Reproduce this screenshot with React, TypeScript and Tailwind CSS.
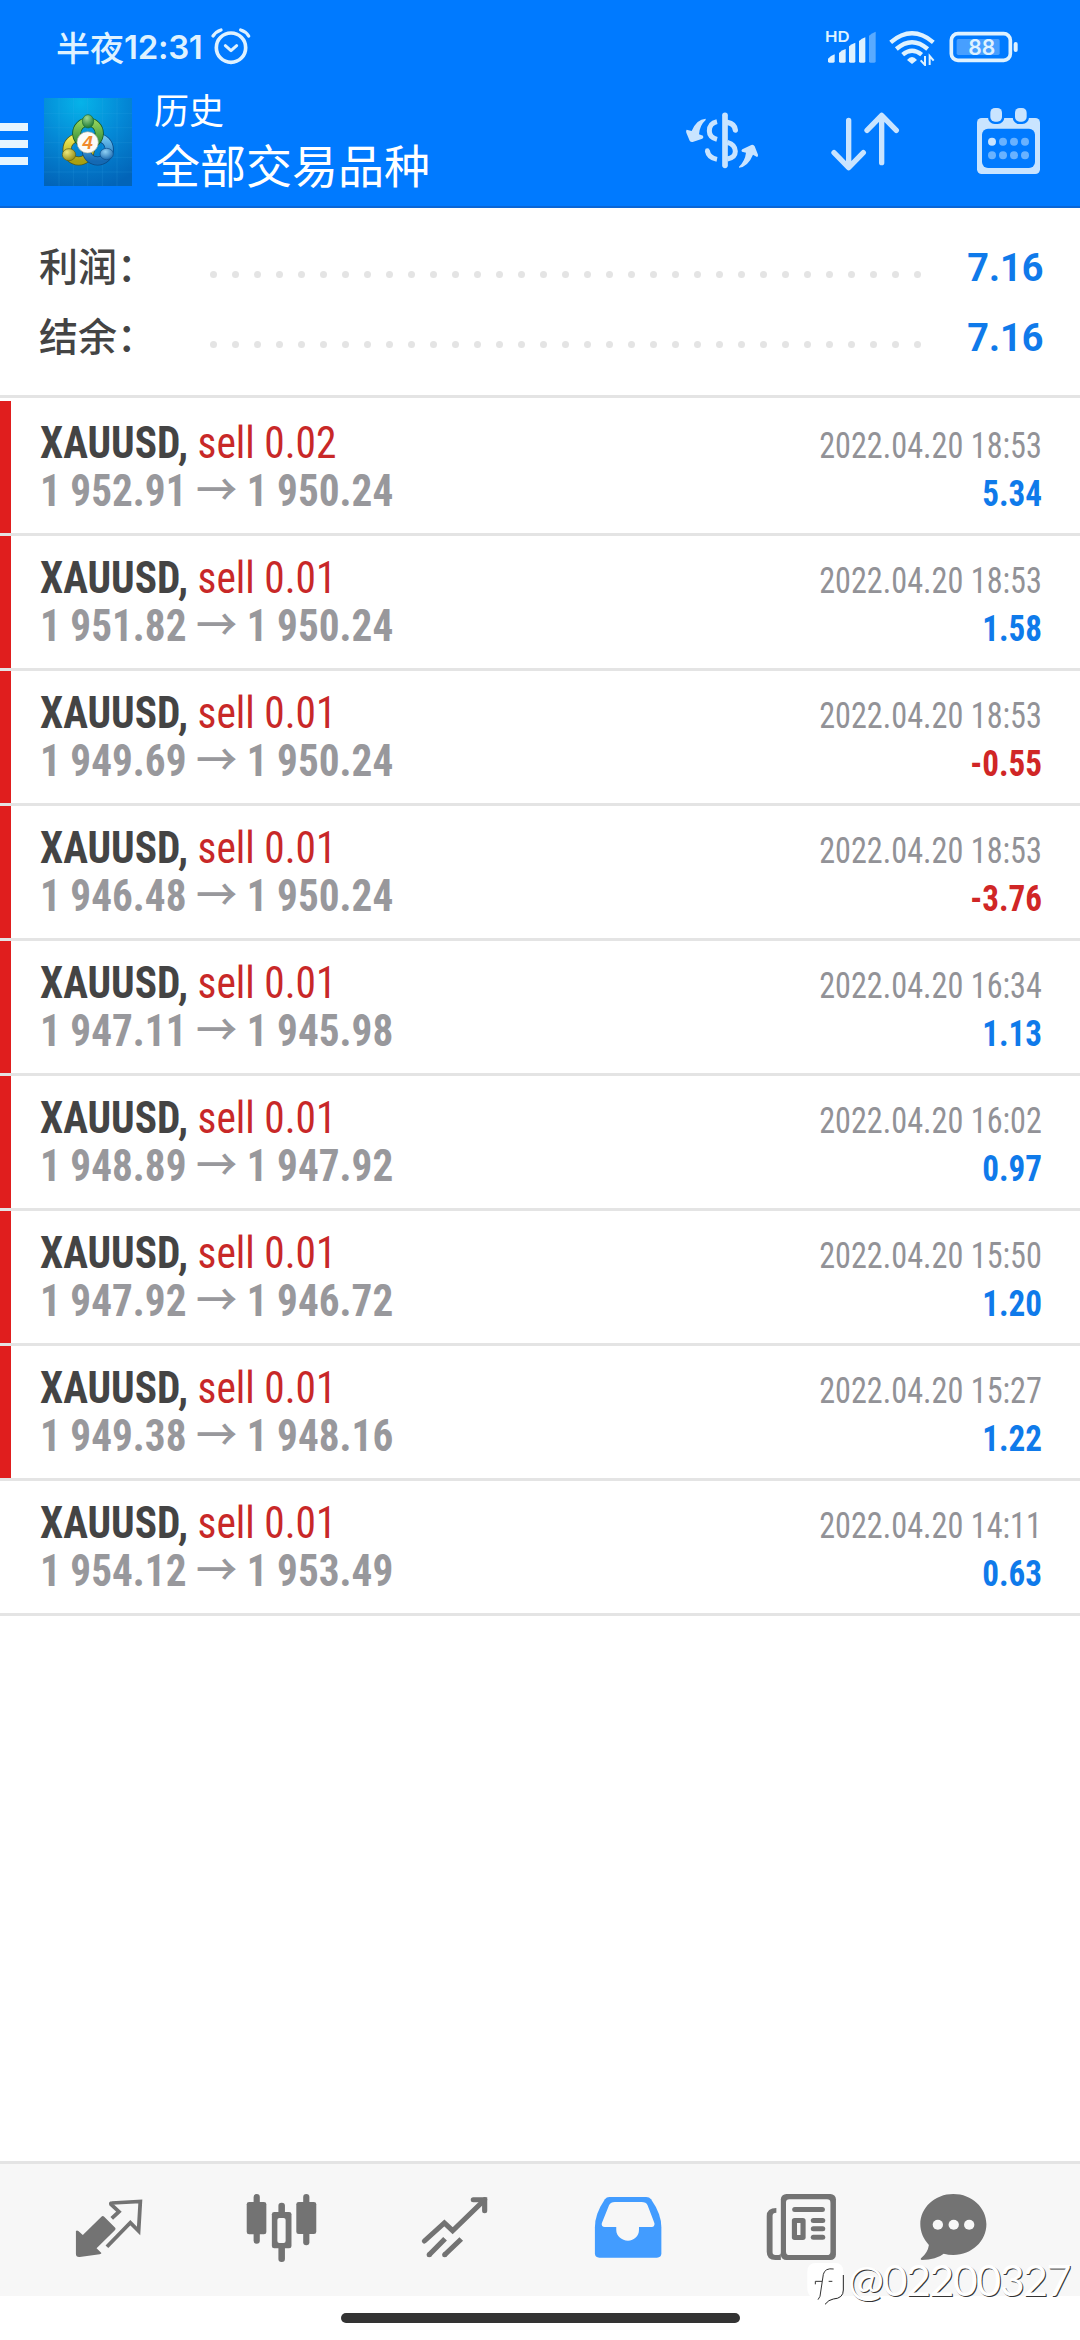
type Deal = {
  volume: string;
  open: string;
  close: string;
  time: string;
  profit: string;
  marked?: boolean;
};

const deals: Deal[] = [
  { volume: "0.02", open: "1 952.91", close: "1 950.24", time: "2022.04.20 18:53", profit: "5.34", marked: true },
  { volume: "0.01", open: "1 951.82", close: "1 950.24", time: "2022.04.20 18:53", profit: "1.58", marked: true },
  { volume: "0.01", open: "1 949.69", close: "1 950.24", time: "2022.04.20 18:53", profit: "-0.55", marked: true },
  { volume: "0.01", open: "1 946.48", close: "1 950.24", time: "2022.04.20 18:53", profit: "-3.76", marked: true },
  { volume: "0.01", open: "1 947.11", close: "1 945.98", time: "2022.04.20 16:34", profit: "1.13", marked: true },
  { volume: "0.01", open: "1 948.89", close: "1 947.92", time: "2022.04.20 16:02", profit: "0.97", marked: true },
  { volume: "0.01", open: "1 947.92", close: "1 946.72", time: "2022.04.20 15:50", profit: "1.20", marked: true },
  { volume: "0.01", open: "1 949.38", close: "1 948.16", time: "2022.04.20 15:27", profit: "1.22", marked: true },
  { volume: "0.01", open: "1 954.12", close: "1 953.49", time: "2022.04.20 14:11", profit: "0.63" },
];

function AlarmIcon() {
  return (
    <svg className="h-[38px] w-[42px]" viewBox="632 82 126 114" fill="none" stroke="#dff2ff" strokeLinecap="round" strokeLinejoin="round">
      <circle cx="695" cy="144" r="44" strokeWidth="11" />
      <path d="M678 138 L695 153 L712 138" strokeWidth="9" />
      <path d="M641 109 Q650 96 665 91 M748 109 Q740 96 724 91" strokeWidth="10" />
    </svg>
  );
}

function SignalIcon() {
  return (
    <svg className="h-[44px] w-[54px]" viewBox="520 64 162 132" fill="#dff2ff">
      <text x="523" y="128" fontFamily="Inter" fontWeight="600" fontSize="45" textLength="74" lengthAdjust="spacingAndGlyphs">HD</text>
      <path d="M532 185 V177 Q540 168 552 164 V185 Q552 189 548 189 H536 Q532 189 532 185Z" />
      <path d="M565 185 V160 Q573 151 585 148 V185 Q585 189 581 189 H569 Q565 189 565 185Z" />
      <path d="M595 185 V140 Q603 132 614 129 V185 Q614 189 610 189 H599 Q595 189 595 185Z" />
      <path d="M625 185 V124 Q633 116 644 113 V185 Q644 189 640 189 H629 Q625 189 625 185Z" />
      <path d="M655 185 V108 Q663 100 675 96 V185 Q675 189 671 189 H659 Q655 189 655 185Z" opacity="0.4" />
    </svg>
  );
}

function WifiIcon() {
  return (
    <svg className="h-[36px] w-[48px]" viewBox="711 90 144 108" fill="none" stroke="#dff2ff">
      <path d="M719 127 Q783 73 847 127" strokeWidth="13" />
      <path d="M736 147 Q783 106 830 147" strokeWidth="13" />
      <path d="M755 164 Q783 140 812 164" strokeWidth="13" />
      <path d="M768 180 Q783 162 798 180 L783 192Z" fill="#dff2ff" stroke="none" />
      <path d="M822 168 V195 L809 181 M836 195 V168 L848 182" strokeWidth="6" />
    </svg>
  );
}

function BatteryIcon() {
  return (
    <svg className="h-[32px] w-[70px]" viewBox="895 93 210 96">
      <rect x="902" y="101" width="177" height="80" rx="20" fill="none" stroke="#dff2ff" strokeWidth="11" />
      <rect x="918" y="117" width="129" height="48" rx="5" fill="#479fff" />
      <rect x="1089" y="126" width="12" height="30" rx="6" fill="#dff2ff" />
      <text x="953" y="166" fill="#dff2ff" fontFamily="Inter" fontWeight="600" fontSize="66" textLength="81" lengthAdjust="spacingAndGlyphs">88</text>
    </svg>
  );
}

function AppLogo() {
  return (
    <svg className="h-[88px] w-[88px]" viewBox="18 16 264 264">
      <defs>
        <radialGradient id="sky" cx="0.42" cy="0.05" r="1">
          <stop offset="0" stopColor="#06b3e9" />
          <stop offset="0.5" stopColor="#0488d6" />
          <stop offset="1" stopColor="#0264b8" />
        </radialGradient>
        <linearGradient id="green" x1="0" y1="0" x2="0" y2="1">
          <stop offset="0" stopColor="#8fd05a" />
          <stop offset="1" stopColor="#2c8838" />
        </linearGradient>
        <linearGradient id="yellow" x1="0" y1="0" x2="0" y2="1">
          <stop offset="0" stopColor="#f0ea58" />
          <stop offset="1" stopColor="#a8a012" />
        </linearGradient>
        <linearGradient id="blue" x1="0" y1="0" x2="0" y2="1">
          <stop offset="0" stopColor="#6fc4f0" />
          <stop offset="1" stopColor="#1469b4" />
        </linearGradient>
        <radialGradient id="knobGreen" cx="0.4" cy="0.25" r="0.8">
          <stop offset="0" stopColor="#9ed893" />
          <stop offset="1" stopColor="#14742c" />
        </radialGradient>
        <radialGradient id="knobYellow" cx="0.35" cy="0.3" r="0.8">
          <stop offset="0" stopColor="#eee87a" />
          <stop offset="1" stopColor="#8a8410" />
        </radialGradient>
        <radialGradient id="knobBlue" cx="0.4" cy="0.3" r="0.8">
          <stop offset="0" stopColor="#8fd0f4" />
          <stop offset="1" stopColor="#0f5fa8" />
        </radialGradient>
      </defs>
      <rect x="18" y="16" width="264" height="264" fill="url(#sky)" />
      <path d="M63 16V280M106 16V280M149 16V280M193 16V280M237 16V280M18 62H282M18 105H282M18 150H282M18 194H282M18 238H282" stroke="#48b4ec" strokeOpacity="0.22" strokeWidth="2" />
      <g fill="none">
        <circle cx="122" cy="170" r="35" stroke="#4f5a1c" strokeWidth="27" />
        <circle cx="122" cy="170" r="35" stroke="url(#yellow)" strokeWidth="22" />
        <circle cx="179" cy="170" r="35" stroke="#0b4a86" strokeWidth="27" />
        <circle cx="179" cy="170" r="35" stroke="url(#blue)" strokeWidth="22" />
        <circle cx="150" cy="122" r="34" stroke="#155a24" strokeWidth="27" />
        <circle cx="150" cy="122" r="34" stroke="url(#green)" strokeWidth="22" />
      </g>
      <ellipse cx="150" cy="86" rx="17" ry="20" fill="url(#knobGreen)" stroke="#1d6a30" strokeWidth="2" />
      <ellipse cx="93" cy="186" rx="20" ry="18" fill="url(#knobYellow)" stroke="#5e5c14" strokeWidth="2" />
      <ellipse cx="206" cy="184" rx="20" ry="17" fill="url(#knobBlue)" stroke="#0f4f8c" strokeWidth="2" />
      <circle cx="149" cy="149" r="32" fill="#fbfbf8" stroke="#9aa89a" strokeWidth="2" />
      <text x="149" y="169" textAnchor="middle" fontFamily="Liberation Sans" fontSize="56" fontWeight="700" fontStyle="italic" fill="#f08a2c">4</text>
    </svg>
  );
}

function CurrencyIcon() {
  return (
    <svg className="h-[80px] w-[100px]" viewBox="0 0 300 240" fill="none" stroke="#c9e4ff">
      <path d="M150 46V196" strokeWidth="17" strokeLinecap="round" />
      <path d="M157 67 Q179 71 181 90" strokeWidth="16" strokeLinecap="round" />
      <path d="M126 65 Q103 70 103 93 Q103 112 126 118" strokeWidth="15" />
      <path d="M157 127 Q181 134 181 154 Q181 173 157 177" strokeWidth="15" />
      <path d="M97 152 Q100 173 126 178" strokeWidth="15" />
      <circle cx="97" cy="152" r="7" fill="#c9e4ff" stroke="none" />
      <path d="M92 56 Q65 57 50 93 L35 89 Q32 92 34 98 L44 122 Q47 127 53 126 L82 116 Q87 113 84 107 L72 103 Q74 76 92 60Z" fill="#c9e4ff" stroke="none" />
      <path d="M192 203 Q219 200 234 164 L246 171 Q250 170 249 164 L239 139 Q236 133 229 135 L202 148 Q197 152 201 155 L213 158 Q210 183 192 200Z" fill="#c9e4ff" stroke="none" />
    </svg>
  );
}

function SortIcon() {
  return (
    <svg className="h-[80px] w-[80px]" viewBox="525 300 240 240" fill="none" stroke="#c9e4ff" strokeWidth="16" strokeLinecap="round" strokeLinejoin="round">
      <path d="M596 361V501M552 458L596 503L640 458" />
      <path d="M695 488V348M651 391L695 346L739 391" />
    </svg>
  );
}

function CalendarIcon() {
  return (
    <svg className="h-[80px] w-[80px]" viewBox="960 300 240 240">
      <rect x="981" y="354" width="189" height="168" rx="14" fill="#c9e4ff" />
      <rect x="996" y="386" width="159" height="118" rx="18" fill="#007aff" />
      <rect x="1014" y="318" width="49" height="54" rx="20" fill="#007aff" />
      <rect x="1088" y="318" width="49" height="54" rx="20" fill="#007aff" />
      <rect x="1021" y="324" width="35" height="41" rx="14" fill="#c9e4ff" />
      <rect x="1095" y="324" width="35" height="41" rx="14" fill="#c9e4ff" />
      <g fill="#69b2ff">
        <circle cx="1026" cy="425" r="12" fill="#c9e4ff" />
        <circle cx="1059" cy="425" r="12" />
        <circle cx="1092" cy="425" r="12" />
        <circle cx="1125" cy="425" r="12" />
        <circle cx="1026" cy="466" r="12" />
        <circle cx="1059" cy="466" r="12" />
        <circle cx="1092" cy="466" r="12" />
        <circle cx="1125" cy="466" r="12" />
      </g>
    </svg>
  );
}

function StatusBar() {
  return (
    <div className="flex h-[90px] items-start pl-[56px] pr-[61px] text-[#dff2ff]">
      <div className="flex h-[90px] items-center pt-[4px]">
        <span className="font-['Noto_Sans_CJK_SC',sans-serif] text-[34px] font-medium leading-[40px]">半夜</span>
        <span className="w-[80px] font-['Inter',sans-serif] text-[33px] font-semibold leading-[40px] tracking-[-0.3px]">12:31</span>
      </div>
      <div className="ml-[6px] mt-[27px]">
        <AlarmIcon />
      </div>
      <div className="ml-auto flex">
        <div className="mt-[21px]"><SignalIcon /></div>
        <div className="ml-[10px] mt-[30px]"><WifiIcon /></div>
        <div className="ml-[13px] mt-[31px]"><BatteryIcon /></div>
      </div>
    </div>
  );
}

function AppBar() {
  return (
    <div className="flex h-[118px] border-b-2 border-[#0a66d6] pr-[30px]">
      <div className="mt-[33px] flex w-[28px] flex-col gap-[9px]">
        <span className="h-[8px] bg-[#e6f5ff]" />
        <span className="h-[8px] bg-[#e6f5ff]" />
        <span className="h-[8px] bg-[#e6f5ff]" />
      </div>
      <div className="ml-[16px] mt-[8px]">
        <AppLogo />
      </div>
      <div className="-mt-px ml-[22px] font-['Noto_Sans_CJK_SC',sans-serif] text-white">
        <div className="text-[35px] leading-[40px]">历史</div>
        <div className="mt-[6px] text-[46px] leading-[56px]">全部交易品种</div>
      </div>
      <div className="ml-auto mt-[10px] flex">
        <CurrencyIcon />
        <div className="ml-[50px]"><SortIcon /></div>
        <div className="ml-[65px]"><CalendarIcon /></div>
      </div>
    </div>
  );
}

function SummaryRow({ label, value }: { label: string; value: string }) {
  return (
    <div className="flex h-[70px] items-baseline leading-[70px]">
      <div className="w-[171px] font-['Noto_Sans_CJK_SC',sans-serif] text-[39px] font-medium text-[#444]">{label}：</div>
      <div className="mt-[42px] flex w-[711px] justify-between self-start">
        {Array.from({ length: 33 }, (_, i) => (
          <span key={i} className="size-[7px] rounded-full bg-[#e4e4e4]" />
        ))}
      </div>
      <div className="ml-auto origin-right scale-x-[0.97] font-['Roboto',sans-serif] text-[39px] font-bold text-[#0f7aea]">{value}</div>
    </div>
  );
}

function DealRow({ deal }: { deal: Deal }) {
  const loss = deal.profit.startsWith("-");
  return (
    <div className="flex h-[135px] border-b-[3px] border-[#e4e4e4] font-['Roboto_Condensed',sans-serif]">
      <div className={deal.marked ? "w-[11px] bg-[#e01e1e]" : "w-[11px]"} />
      <div className="flex-1 pl-[29px] pr-[38px] pt-[18px]">
        <div className="flex h-[48px] items-baseline justify-between leading-[48px]">
          <div className="origin-left scale-x-[0.94] text-[44px] text-[#c82828]">
            <span className="font-bold text-[#444]">XAUUSD,</span> sell {deal.volume}
          </div>
          <div className="origin-right scale-x-[0.895] text-[36px] text-[#929297]">{deal.time}</div>
        </div>
        <div className="flex h-[48px] items-baseline justify-between leading-[48px]">
          <div className="origin-left scale-x-[0.937] text-[44px] font-bold text-[#98989c]">
            {deal.open} <span className="font-['Noto_Sans_CJK_SC',sans-serif] font-medium leading-[0]">→</span> {deal.close}
          </div>
          <div className={loss ? "origin-right scale-x-[0.92] text-[36px] font-bold text-[#d02626]" : "origin-right scale-x-[0.92] text-[36px] font-bold text-[#0f7aea]"}>{deal.profit}</div>
        </div>
      </div>
    </div>
  );
}

function QuotesIcon() {
  return (
    <svg className="h-[132px] w-[173px]" viewBox="62.4 42 502.4 396" preserveAspectRatio="none">
      <path d="M219 243Q222 240 226 243L239 255L293 200Q297 196 301 200L333 233Q336 237 332 241L279 295L293 309Q293 312 288 313L230 321Q219 322 219 312Z" fill="#737373" />
      <path d="M323 205L344 185L321 163Q319 159 323 159L406 154L401 243L377 218L309 290" fill="none" stroke="#737373" strokeWidth="11" />
    </svg>
  );
}

function ChartsIcon() {
  return (
    <svg className="h-[132px] w-[173px]" viewBox="564.8 42 502.4 396" preserveAspectRatio="none">
      <g fill="#737373">
        <rect x="735" y="132" width="18" height="149" rx="9" />
        <rect x="715" y="156" width="57" height="97" rx="7" />
        <rect x="879" y="132" width="18" height="154" rx="9" />
        <rect x="859" y="156" width="58" height="96" rx="7" />
        <rect x="807" y="158" width="19" height="178" rx="9" />
        <rect x="788" y="186" width="57" height="109" rx="7" />
      </g>
      <rect x="804" y="204" width="24" height="75" rx="6" fill="#f7f7f7" />
    </svg>
  );
}

function TradeIcon() {
  return (
    <svg className="h-[132px] w-[173px]" viewBox="1067.2 42 502.4 396" preserveAspectRatio="none" fill="none" stroke="#737373" strokeWidth="15">
      <path d="M1231 273L1289 219L1313 242L1406 149" strokeLinecap="round" />
      <path d="M1373 149H1406V182" strokeLinecap="round" />
      <path d="M1291 266L1245 314M1338 267L1290 314" />
      <g fill="#737373" stroke="none">
        <circle cx="1245" cy="314" r="7.5" />
        <circle cx="1290" cy="314" r="7.5" />
      </g>
    </svg>
  );
}

function HistoryIcon() {
  return (
    <svg className="h-[132px] w-[173px]" viewBox="1.45 42 502.4 396" preserveAspectRatio="none">
      <path d="M200 141H307Q316 141 321 148Q351 192 351 232V310Q351 323 338 323H171Q158 323 158 310V232Q158 192 187 148Q192 141 200 141Z" fill="#429cff" />
      <path d="M216 156H293Q307 156 311 166L331 220Q332 231 323 231H286V240C286 258 272 272 254 272C236 272 220 258 220 240V231H187Q176 231 178 220L199 166Q204 156 216 156Z" fill="#f7f7f7" />
    </svg>
  );
}

function NewsIcon() {
  return (
    <svg className="h-[132px] w-[173px]" viewBox="503.9 42 502.4 396" preserveAspectRatio="none">
      <rect x="698" y="132" width="160" height="198" rx="16" fill="#737373" />
      <path d="M685 174V188Q674 188 674 197V307Q674 315 682 315H691Q698 315 698 307V330H682Q657 330 657 305V198Q657 174 685 174Z" fill="#737373" />
      <rect x="713" y="148" width="129" height="167" rx="10" fill="#f7f7f7" />
      <g fill="#737373">
        <rect x="731" y="171" width="95" height="15" rx="7.5" />
        <rect x="730" y="204" width="40" height="66" rx="8" />
        <rect x="785" y="204" width="42" height="15" rx="7.5" />
        <rect x="785" y="229" width="42" height="15" rx="7.5" />
        <rect x="785" y="254" width="42" height="15" rx="7.5" />
      </g>
      <rect x="745" y="219" width="10" height="36" fill="#f7f7f7" />
    </svg>
  );
}

function ChatIcon() {
  return (
    <svg className="h-[132px] w-[133.5px]" viewBox="1006.3 42 387.7 396" preserveAspectRatio="none">
      <path d="M1199 132C1253 132 1295 173 1295 223S1253 315 1199 315Q1184 315 1171 311Q1150 329 1107 330Q1102 329 1105 325Q1125 308 1128 285C1112 267 1103 246 1103 223C1103 173 1145 132 1199 132Z" fill="#737373" />
      <g fill="#f7f7f7">
        <circle cx="1154" cy="224" r="15" />
        <circle cx="1200" cy="224" r="15" />
        <circle cx="1245" cy="224" r="15" />
      </g>
    </svg>
  );
}

function Watermark() {
  return (
    <div className="absolute left-[804px] top-[2258px] flex items-start">
      <svg className="h-[50px] w-[42px]" viewBox="24 9 126 150">
        <path d="M60 24H118Q142 24 142 50V105Q142 130 112 132Q98 134 88 149Q88 136 84 134Q34 136 34 100V50Q34 24 60 24Z" fill="#fff" />
        <path d="M142 60V105Q142 130 112 132Q98 134 87 148" fill="none" stroke="#222" strokeWidth="3" />
        <path d="M113 42Q87 38 82 58L72 124L66 134M58 88V79H78M98 79H109" fill="none" stroke="#333" strokeWidth="3" />
      </svg>
      <span className="-mt-[3px] ml-[2px] font-['Lato',sans-serif] text-[43px] leading-[50px] tracking-[-1.5px] text-white [text-shadow:1px_1px_0_#333]">@02200327</span>
    </div>
  );
}

export default function App() {
  return (
    <div className="relative flex h-[2340px] w-[1080px] flex-col overflow-hidden bg-white">
      <header className="h-[208px] bg-[#007aff]">
        <StatusBar />
        <AppBar />
      </header>
      <section className="h-[190px] border-b-[3px] border-[#e4e4e4] pl-[39px] pr-[37px] pt-[21px]">
        <SummaryRow label="利润" value="7.16" />
        <SummaryRow label="结余" value="7.16" />
      </section>
      <main className="flex-1 pt-[3px]">
        {deals.map((deal, i) => (
          <DealRow key={i} deal={deal} />
        ))}
      </main>
      <nav className="flex h-[135px] shrink-0 border-t-[3px] border-[#e4e4e4] bg-[#f7f7f7] pl-[21.5px]">
        <QuotesIcon />
        <ChartsIcon />
        <TradeIcon />
        <HistoryIcon />
        <NewsIcon />
        <ChatIcon />
      </nav>
      <div className="flex h-[44px] shrink-0 justify-center pt-[17px]">
        <div className="h-[10px] w-[399px] rounded-full bg-[#333]" />
      </div>
      <Watermark />
    </div>
  );
}
